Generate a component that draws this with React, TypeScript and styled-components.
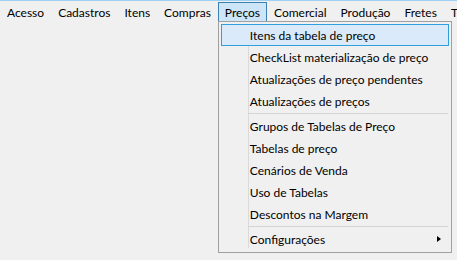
import styled, { createGlobalStyle } from "styled-components";

const GlobalStyle = createGlobalStyle`
  html, body {
    margin: 0;
    padding: 0;
    background: #f0f0f0;
  }
  body {
    width: 457px;
    height: 260px;
    overflow: hidden;
    font-family: Lato, "Noto Sans", sans-serif;
    font-size: 12px;
    color: #000;
  }
`;

const topMenus = ["Acesso", "Cadastros", "Itens", "Compras", "Preços", "Comercial", "Produção", "Fretes", "Tributação"];

type Entry = { label: string; hot?: boolean; sub?: boolean } | "sep";

const entries: Entry[] = [
  { label: "Itens da tabela de preço", hot: true },
  { label: "CheckList materialização de preço" },
  { label: "Atualizações de preço pendentes" },
  { label: "Atualizações de preços" },
  "sep",
  { label: "Grupos de Tabelas de Preço" },
  { label: "Tabelas de preço" },
  { label: "Cenários de Venda" },
  { label: "Uso de Tabelas" },
  { label: "Descontos na Margem" },
  "sep",
  { label: "Configurações", sub: true },
];

export default function App() {
  return (
    <>
      <GlobalStyle />
      <Window>
        <MenuBar>
          {topMenus.map((m) => (
            <BarItem key={m} $open={m === "Preços"}>
              {m}
              {m === "Preços" && (
                <Dropdown>
                  {entries.map((e, i) =>
                    e === "sep" ? (
                      <Separator key={i} />
                    ) : (
                      <Item key={i} $hot={e.hot}>
                        <Label>{e.label}</Label>
                        {e.sub && <Arrow />}
                      </Item>
                    )
                  )}
                </Dropdown>
              )}
            </BarItem>
          ))}
        </MenuBar>
      </Window>
    </>
  );
}

const Window = styled.div`
  width: 457px;
  height: 260px;
  border-top: 1px solid #9fd1f3;
  box-sizing: border-box;
  overflow: hidden;
`;

const MenuBar = styled.div`
  display: flex;
  align-items: flex-start;
  height: 21px;
  padding-top: 1px;
  white-space: nowrap;
`;

const BarItem = styled.div<{ $open?: boolean }>`
  position: relative;
  display: flex;
  align-items: center;
  height: 18px;
  padding: 0 6px;
  border: 1px solid ${(p) => (p.$open ? "#3f80b3" : "transparent")};
  background: ${(p) => (p.$open ? "#cce5f7" : "transparent")};
`;

const Dropdown = styled.div`
  position: absolute;
  left: -1px;
  top: 18px;
  width: 228px;
  padding: 2px;
  border: 1px solid #a0a0a0;
  background:
    linear-gradient(#dadada, #dadada) 29px 2px / 1px calc(100% - 6px) no-repeat,
    #f0f0f0;
  z-index: 2;
`;

const Item = styled.div<{ $hot?: boolean }>`
  position: relative;
  display: flex;
  align-items: center;
  height: 18px;
  padding: 1px 0 1px 28px;
  border: 1px solid ${(p) => (p.$hot ? "#2ea0dc" : "transparent")};
  background: ${(p) => (p.$hot ? "#dbeafa" : "transparent")};
`;

const Label = styled.span`
  flex: 1;
  line-height: 18px;
  padding-top: 1px;
`;

const Arrow = styled.span`
  width: 0;
  height: 0;
  margin-right: 7px;
  border-top: 3.5px solid transparent;
  border-bottom: 3.5px solid transparent;
  border-left: 4px solid #000;
`;

const Separator = styled.div`
  height: 1px;
  margin: 0 1px 1px 27px;
  border-top: 1px solid transparent;
  background: #d4d4d4;
  background-clip: content-box;
`;
